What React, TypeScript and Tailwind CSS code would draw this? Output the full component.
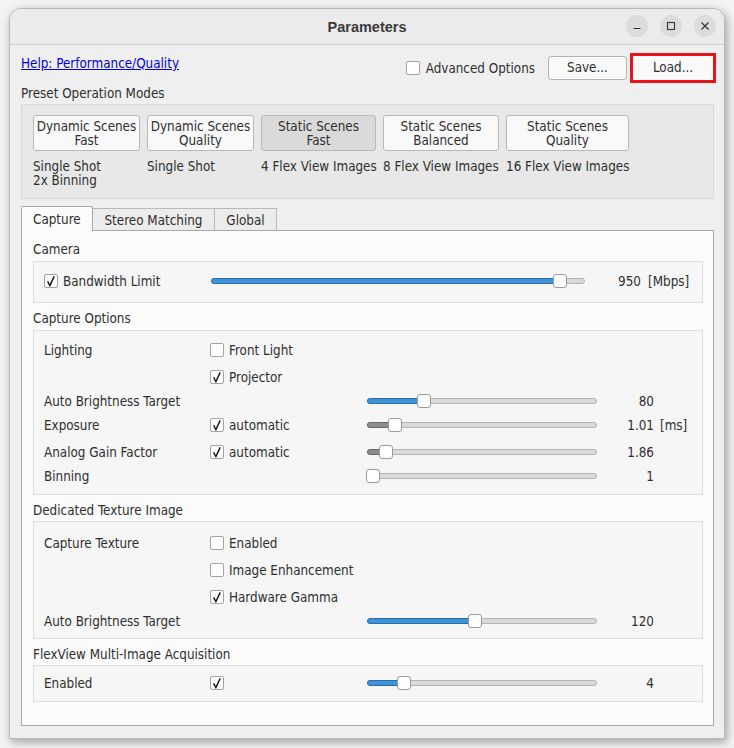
import React from "react";

const font = "font-['DejaVu_Sans_Condensed','DejaVu_Sans',sans-serif]";

function CheckBox({ checked }: { checked?: boolean }) {
  return (
    <span className="w-[14px] h-[14px] shrink-0 bg-white border border-[#a4a4a4] rounded-[2px] flex items-center justify-center">
      {checked && (
        <svg width="12" height="12" viewBox="0 0 12 12">
          <path d="M2.6 6.4 L4.9 10.6 L9.2 1.4" fill="none" stroke="#111" strokeWidth="1.4" />
        </svg>
      )}
    </span>
  );
}

function Slider({ width, pos, gray }: { width: number; pos: number; gray?: boolean }) {
  return (
    <div className="relative h-[14px] shrink-0" style={{ width }}>
      <div className="absolute left-0 right-0 top-[4px] h-[6px] rounded-full bg-[#dadada] border border-[#b4b4b4]" />
      <div
        className={
          gray
            ? "absolute left-0 top-[4px] h-[6px] rounded-l-full bg-[#8c8c8c] border border-[#6a6a6a]"
            : "absolute left-0 top-[4px] h-[6px] rounded-l-full bg-[#3f93da] border border-[#2b6ea8]"
        }
        style={{ width: pos }}
      />
      <div
        className="absolute top-0 w-[14px] h-[14px] rounded-[3px] bg-white border border-[#9a9a9a]"
        style={{ left: pos - 7 }}
      />
    </div>
  );
}

type RowProps = {
  h: number;
  label?: string;
  check?: boolean;
  checkText?: string;
  slider?: { pos: number; gray?: boolean };
  value?: string;
  unit?: string;
};

// text nudged down 1px to sit like the Qt baseline
function Row({ h, label, check, checkText, slider, value, unit }: RowProps) {
  return (
    <div className="flex items-center" style={{ height: h }}>
      <div className="w-[166px] shrink-0 pt-[2px]">{label}</div>
      <div className="w-[157px] shrink-0 flex items-center gap-[5px]">
        {check !== undefined && <CheckBox checked={check} />}
        {checkText && <span className="pt-[2px]">{checkText}</span>}
      </div>
      <div className="w-[230px] shrink-0">{slider && <Slider width={230} pos={slider.pos} gray={slider.gray} />}</div>
      <div className="w-[57px] shrink-0 text-right pt-[2px]">{value}</div>
      {unit && <div className="ml-[6px] pt-[2px]">{unit}</div>}
    </div>
  );
}

const presets = [
  { w: 107, title: ["Dynamic Scenes", "Fast"], desc: ["Single Shot", "2x Binning"] },
  { w: 107, title: ["Dynamic Scenes", "Quality"], desc: ["Single Shot"] },
  { w: 115, title: ["Static Scenes", "Fast"], desc: ["4 Flex View Images"], pressed: true },
  { w: 116, title: ["Static Scenes", "Balanced"], desc: ["8 Flex View Images"] },
  { w: 123, title: ["Static Scenes", "Quality"], desc: ["16 Flex View Images"] },
];

export default function App() {
  return (
    <div className={`w-[734px] h-[748px] bg-[#f3f3f3] pt-[8px] pl-[9px] text-[13.33px] leading-[16px] text-[#2f2f2f] ${font}`}>
      <div className="w-[716px] h-[731px] rounded-t-[12px] bg-[#efefef] border border-[#b9b9b9] shadow-[2px_3px_10px_rgba(0,0,0,0.35)] flex flex-col overflow-hidden">
        {/* title bar */}
        <div className="h-[36px] shrink-0 bg-[#ebebeb] border-b border-[#cfcfcf] relative flex items-center justify-center">
          <span className="font-['Liberation_Sans',sans-serif] font-bold text-[14.5px] text-[#3a3a3a]">Parameters</span>
          <div className="absolute right-[8px] top-[6px] flex gap-[12px]">
            <span className="w-[22px] h-[22px] rounded-full bg-[#dcdcdc] flex items-center justify-center">
              <svg width="10" height="10" viewBox="0 0 10 10"><path d="M1.5 7.5 H8.5" stroke="#333" strokeWidth="1.2" /></svg>
            </span>
            <span className="w-[22px] h-[22px] rounded-full bg-[#dcdcdc] flex items-center justify-center">
              <svg width="10" height="10" viewBox="0 0 10 10"><rect x="1.5" y="1.5" width="7" height="7" fill="none" stroke="#333" strokeWidth="1.1" /></svg>
            </span>
            <span className="w-[22px] h-[22px] rounded-full bg-[#dcdcdc] flex items-center justify-center">
              <svg width="10" height="10" viewBox="0 0 10 10"><path d="M1.5 1.5 L8.5 8.5 M8.5 1.5 L1.5 8.5" stroke="#333" strokeWidth="1.2" /></svg>
            </span>
          </div>
        </div>

        <div className="flex-1 flex flex-col pl-[11px] pr-[10px]">
          {/* top row */}
          <div className="mt-[8px] h-[30px] flex items-center">
            <a href="#" className="self-start mt-[3px] text-[#0000ee] underline">Help: Performance/Quality</a>
            <div className="ml-auto flex items-center gap-[6px]">
              <CheckBox />
              <span className="pt-[1px]">Advanced Options</span>
            </div>
            <button className="ml-[13px] w-[79px] h-[24px] bg-[#f9f9f9] border border-[#b2b2b2] rounded-[3px]">Save...</button>
            <button className="ml-[3px] w-[86px] h-[30px] bg-[#f9f9f9] border-[3px] border-[#e8141c] -mr-[2px]">Load...</button>
          </div>

          <div className="mt-[3px]">Preset Operation Modes</div>
          <div className="mt-[2px] h-[95px] shrink-0 bg-[#e8e8e8] border border-[#d8d8d8] pl-[11px] pt-[10px] flex gap-[7px]">
            {presets.map((p, i) => (
              <div key={i} className="shrink-0" style={{ width: p.w }}>
                <div
                  className={
                    p.pressed
                      ? "h-[36px] pt-[2px] flex flex-col items-center justify-center leading-[14px] bg-[#dadada] border border-[#b8b8b8] rounded-[3px]"
                      : "h-[36px] pt-[2px] flex flex-col items-center justify-center leading-[14px] bg-[#f9f9f9] border border-[#b8b8b8] rounded-[3px]"
                  }
                >
                  <span>{p.title[0]}</span>
                  <span>{p.title[1]}</span>
                </div>
                <div className="mt-[9px] leading-[14px] whitespace-nowrap">
                  {p.desc.map((d) => (
                    <div key={d}>{d}</div>
                  ))}
                </div>
              </div>
            ))}
          </div>

          {/* tabs */}
          <div className="mt-[7px] flex items-end h-[24px]">
            <div className="w-[72px] h-[25px] -mb-px z-10 bg-[#fbfbfb] border border-b-0 border-[#a9a9a9] rounded-t-[2px] flex items-center pl-[11px] pt-[2px]">Capture</div>
            <div className="w-[122px] h-[22px] bg-[#ececec] border border-l-0 border-b-0 border-[#b9b9b9] flex items-center justify-center pt-[2px]">Stereo Matching</div>
            <div className="w-[62px] h-[22px] bg-[#ececec] border border-l-0 border-b-0 border-[#b9b9b9] flex items-center justify-center pt-[2px]">Global</div>
          </div>

          <div className="h-[496px] shrink-0 bg-[#fbfbfb] border border-[#a9a9a9] pl-[11px] pr-[10px] pt-[11px]">
            <div>Camera</div>
            <div className="mt-[3px] h-[42px] bg-[#f6f6f6] border border-[#dedede] pl-[10px] pt-[8px]">
              <div className="h-[22px] flex items-center">
                <div className="w-[167px] shrink-0 flex items-center gap-[5px]">
                  <CheckBox checked />
                  <span className="pt-[2px]">Bandwidth Limit</span>
                </div>
                <Slider width={374} pos={349} />
                <div className="w-[56px] text-right pt-[2px]">950</div>
                <div className="ml-[7px] pt-[2px]">[Mbps]</div>
              </div>
            </div>

            <div className="mt-[8px]">Capture Options</div>
            <div className="mt-[3px] h-[165px] bg-[#f6f6f6] border border-[#dedede] pl-[10px] pt-[6px]">
              <Row h={26} label="Lighting" check={false} checkText="Front Light" />
              <Row h={27} check checkText="Projector" />
              <Row h={22} label="Auto Brightness Target" slider={{ pos: 57 }} value="80" />
              <Row h={26} label="Exposure" check checkText="automatic" slider={{ pos: 28, gray: true }} value="1.01" unit="[ms]" />
              <Row h={27} label="Analog Gain Factor" check checkText="automatic" slider={{ pos: 19, gray: true }} value="1.86" />
              <Row h={22} label="Binning" slider={{ pos: 6 }} value="1" />
            </div>

            <div className="mt-[8px]">Dedicated Texture Image</div>
            <div className="mt-[2px] h-[118px] bg-[#f6f6f6] border border-[#dedede] pl-[10px] pt-[7px]">
              <Row h={27} label="Capture Texture" check={false} checkText="Enabled" />
              <Row h={27} check={false} checkText="Image Enhancement" />
              <Row h={27} check checkText="Hardware Gamma" />
              <Row h={22} label="Auto Brightness Target" slider={{ pos: 108 }} value="120" />
            </div>

            <div className="mt-[8px]">FlexView Multi-Image Acquisition</div>
            <div className="mt-[2px] h-[37px] bg-[#f6f6f6] border border-[#dedede] pl-[10px] pt-[6px]">
              <Row h={22} label="Enabled" check slider={{ pos: 37 }} value="4" />
            </div>
          </div>
        </div>
      </div>
    </div>
  );
}
